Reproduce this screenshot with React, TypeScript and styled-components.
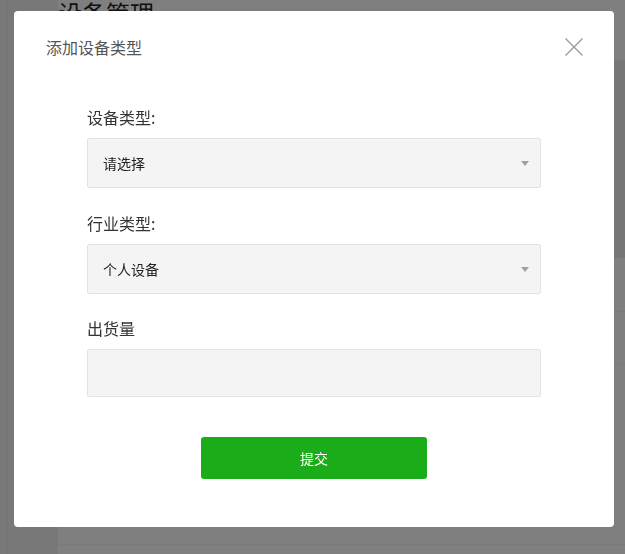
import React from "react";
import styled, { createGlobalStyle } from "styled-components";

const Global = createGlobalStyle`
  html, body { margin: 0; padding: 0; background: #ffffff; }
  body { font-family: "Noto Sans CJK SC", "Noto Sans", sans-serif; width: 625px; height: 554px; overflow: hidden; }
  * { box-sizing: border-box; }
`;

const Page = styled.div`
  display: flex;
  width: 625px;
  height: 554px;
`;

const Rail = styled.div`
  width: 7px;
  background: #f1f4f3;
  border-right: 1px solid #e4e6e5;
`;

const Sidebar = styled.div`
  width: 51px;
  background: #eef0ef;
`;

const Main = styled.div`
  flex: 1;
  display: flex;
  flex-direction: column;
`;

const Header = styled.div`
  height: 198px;
  background: #efefef;
`;

const PageTitle = styled.h1`
  margin: 0;
  padding-left: 0;
  font-size: 24px;
  line-height: 26px;
  font-weight: 400;
  color: #222;
  background: #ffffff;
  height: 60px;
`;

const Row = styled.div<{ $h: number }>`
  height: ${(p) => p.$h}px;
  border-bottom: 1px solid #f4f4f4;
  background: #ffffff;
`;

const Overlay = styled.div`
  position: fixed;
  inset: 0;
  background: rgba(0, 0, 0, 0.5);
  padding: 11px 0 0 14px;
`;

const Modal = styled.div`
  width: 600px;
  height: 516px;
  background: #ffffff;
  border-radius: 4px;
  display: flex;
  flex-direction: column;
`;

const ModalHeader = styled.div`
  display: flex;
  align-items: center;
  justify-content: space-between;
  padding: 25px 31px 0 32px;
  height: 47px;
`;

const ModalTitle = styled.div`
  font-size: 16px;
  line-height: 22px;
  color: #555555;
`;

const Close = styled.button`
  border: 0;
  background: transparent;
  padding: 0;
  width: 18px;
  height: 18px;
  display: flex;
  cursor: pointer;
`;

const Form = styled.div`
  padding: 48px 73px 0 73px;
  display: flex;
  flex-direction: column;
`;

const Field = styled.div<{ $gap?: number }>`
  display: flex;
  flex-direction: column;
  margin-bottom: ${(p) => p.$gap ?? 23}px;
`;

const Label = styled.div`
  font-size: 16px;
  line-height: 22px;
  color: #333333;
  margin-bottom: 10px;
`;

const SelectBox = styled.div<{ $h?: number }>`
  position: relative;
  height: ${(p) => p.$h ?? 50}px;
  background: #f4f4f4;
  border: 1px solid #e2e2e2;
  border-radius: 2px;
  display: flex;
  align-items: center;
  padding-left: 15px;
  font-size: 14px;
  color: #222222;
`;

const Caret = styled.span`
  position: absolute;
  right: 11px;
  top: 50%;
  margin-top: -2px;
  width: 0;
  height: 0;
  border-left: 4px solid transparent;
  border-right: 4px solid transparent;
  border-top: 5px solid #a0a0a0;
`;

const Actions = styled.div`
  display: flex;
  justify-content: center;
  padding-top: 17px;
`;

const Submit = styled.button`
  width: 226px;
  height: 42px;
  border: 0;
  border-radius: 3px;
  background: #1aad19;
  color: #ffffff;
  font-family: "Noto Sans CJK SC", sans-serif;
  font-size: 14px;
`;

export default function App() {
  return (
    <>
      <Global />
      <Page>
        <Rail />
        <Sidebar />
        <Main>
          <PageTitle>设备管理</PageTitle>
          <Header />
          <Row $h={54} />
          <Row $h={53} />
          <Row $h={180} />
        </Main>
      </Page>
      <Overlay>
        <Modal>
          <ModalHeader>
            <ModalTitle>添加设备类型</ModalTitle>
            <Close aria-label="关闭">
              <svg width="18" height="18" viewBox="0 0 18 18">
                <path d="M0.5 0.5 L17.5 17.5 M17.5 0.5 L0.5 17.5" stroke="#9a9a9a" strokeWidth="1.3" fill="none" />
              </svg>
            </Close>
          </ModalHeader>
          <Form>
            <Field $gap={24}>
              <Label>设备类型:</Label>
              <SelectBox>
                请选择
                <Caret />
              </SelectBox>
            </Field>
            <Field>
              <Label>行业类型:</Label>
              <SelectBox>
                个人设备
                <Caret />
              </SelectBox>
            </Field>
            <Field>
              <Label>出货量</Label>
              <SelectBox $h={48} />
            </Field>
            <Actions>
              <Submit>提交</Submit>
            </Actions>
          </Form>
        </Modal>
      </Overlay>
    </>
  );
}
